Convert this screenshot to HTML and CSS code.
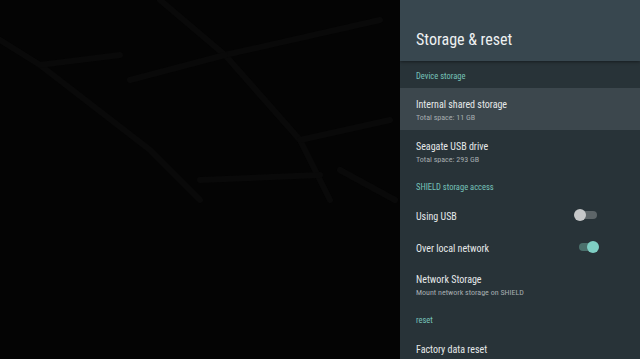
FILE: index.html
```html
<!DOCTYPE html>
<html>
<head>
<meta charset="utf-8">
<link rel="stylesheet" href="styles.css">
</head>
<body>
<div class="screen">
  <div class="backdrop">
    <svg class="pattern" viewBox="0 0 400 359" preserveAspectRatio="none">
      <g stroke="#090909" stroke-width="6" fill="none" stroke-linecap="round">
        <path d="M40 65 L150 150 L200 200"/>
        <path d="M0 40 L40 65 L120 55"/>
        <path d="M225 55 L300 140 L330 200"/>
        <path d="M160 0 L225 55 L380 20"/>
        <path d="M225 55 L130 80"/>
        <path d="M300 140 L390 120"/>
        <path d="M200 180 L320 175"/>
        <path d="M340 170 L395 200"/>
      </g>
    </svg>
  </div>
  <aside class="panel">
    <header class="panel-header">
      <h1 class="panel-title">Storage &amp; reset</h1>
    </header>
    <div class="list">
      <div class="section">Device storage</div>
      <div class="item item-two selected">
        <div class="item-title">Internal shared storage</div>
        <div class="item-sub">Total space: 11 GB</div>
      </div>
      <div class="item item-two">
        <div class="item-title">Seagate USB drive</div>
        <div class="item-sub">Total space: 293 GB</div>
      </div>
      <div class="section">SHIELD storage access</div>
      <div class="item item-one">
        <div class="item-title">Using USB</div>
        <span class="toggle"><span class="track"></span><span class="thumb"></span></span>
      </div>
      <div class="item item-one">
        <div class="item-title">Over local network</div>
        <span class="toggle on"><span class="track"></span><span class="thumb"></span></span>
      </div>
      <div class="item item-two">
        <div class="item-title">Network Storage</div>
        <div class="item-sub">Mount network storage on SHIELD</div>
      </div>
      <div class="section">reset</div>
      <div class="item item-one">
        <div class="item-title">Factory data reset</div>
      </div>
    </div>
  </aside>
</div>
</body>
</html>
```
FILE: styles.css
```css
html, body {
  margin: 0;
  padding: 0;
  background: #050505;
}
body {
  width: 640px;
  height: 359px;
  overflow: hidden;
  font-family: "Roboto Condensed", "Liberation Sans Narrow", Roboto, sans-serif;
  font-stretch: condensed;
}
* {
  box-sizing: border-box;
}
.screen {
  display: flex;
  width: 640px;
  height: 359px;
}
.backdrop {
  width: 400px;
  height: 359px;
  background: #040404;
}
.pattern {
  display: block;
  width: 400px;
  height: 359px;
}
.panel {
  width: 240px;
  height: 359px;
  display: flex;
  flex-direction: column;
  background: #283338;
  overflow: hidden;
}
.panel-header {
  height: 61px;
  flex: none;
  background: #38474f;
  display: flex;
  align-items: flex-end;
  padding-left: 16px;
  box-shadow: 0 1px 3px rgba(0,0,0,0.45);
  position: relative;
  z-index: 1;
}
.panel-title {
  margin: 0 0 12px 0;
  font-size: 16px;
  font-weight: 400;
  color: #eef1f2;
  line-height: 18px;
}
.list {
  display: flex;
  flex-direction: column;
}
.section {
  height: 27px;
  flex: none;
  display: flex;
  align-items: center;
  padding: 2px 0 0 16px;
  font-size: 8.5px;
  color: #76c2b8;
}
.item {
  flex: none;
  padding: 0 16px;
  display: flex;
  flex-direction: column;
  justify-content: center;
}
.item-two {
  height: 42px;
  padding-top: 3px;
}
.item-one {
  height: 32px;
  padding: 3px 41px 0 16px;
  flex-direction: row;
  align-items: center;
  justify-content: space-between;
}
.selected {
  background: #3c474d;
}
.item-title {
  font-size: 10px;
  color: #e6e9ea;
  line-height: 12px;
}
.item-sub {
  font-size: 8px;
  color: #a6adb0;
  line-height: 10px;
  margin-top: 2px;
}
.toggle {
  position: relative;
  width: 25px;
  height: 14px;
  display: block;
  margin-top: -3px;
}
.track {
  position: absolute;
  left: 5px;
  top: 3px;
  width: 18px;
  height: 8px;
  border-radius: 4px;
  background: #5d6568;
}
.thumb {
  position: absolute;
  left: 0;
  top: 1px;
  width: 12px;
  height: 12px;
  border-radius: 50%;
  background: #c6c8c9;
}
.toggle.on .track {
  left: 5px;
  background: #4b706c;
}
.toggle.on .thumb {
  left: 13px;
  background: #7fcfc4;
}
```
